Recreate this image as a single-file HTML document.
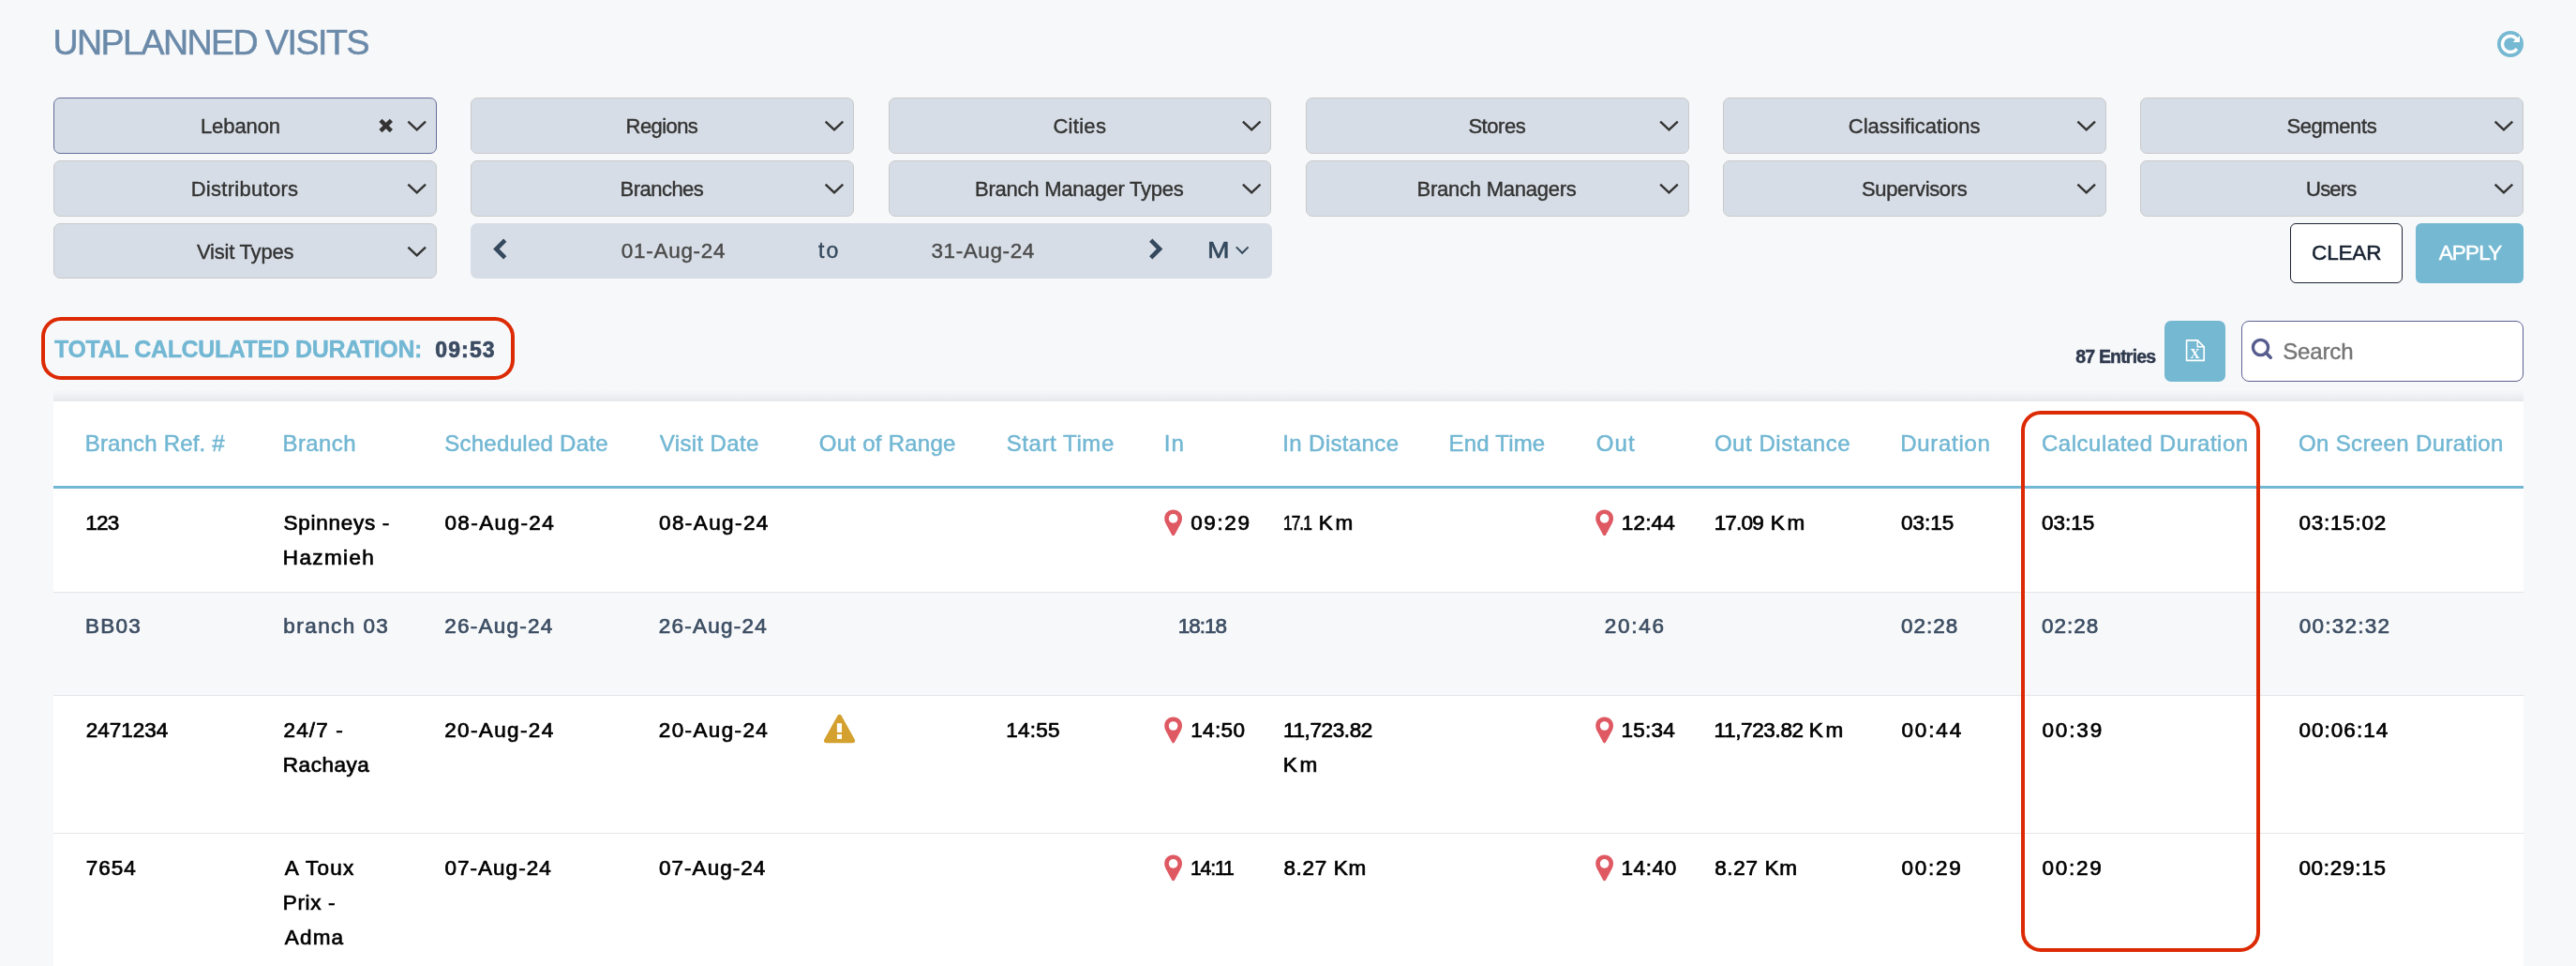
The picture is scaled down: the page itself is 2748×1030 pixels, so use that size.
<!DOCTYPE html>
<html lang="en"><head><meta charset="utf-8"><title>Unplanned Visits</title>
<style>
html,body{margin:0;padding:0}
body{width:2748px;height:1030px;overflow:hidden;position:relative;background:#f7f8fa;font-family:"Liberation Sans",sans-serif;}
.b{position:absolute;display:block}
.t{position:absolute;white-space:nowrap;display:block}
#wrap{position:absolute;left:0;top:0;width:2748px;height:1030px;will-change:transform}
</style></head><body><div id="wrap">
<span class="t" style="left:56.40px;top:26.85px;font-size:37.5px;line-height:37.5px;color:#6b8aa9;letter-spacing:-1.500px;-webkit-text-stroke:0.55px #6b8aa9;">UNPLANNED VISITS</span>
<svg class="b" style="left:2664px;top:33px" width="29" height="29" viewBox="0 0 29 29"><circle cx="14" cy="14" r="14" fill="#76b9d2"/><path d="M20.9 18.9 A8.5 8.5 0 1 1 21.1 9.3" fill="none" stroke="#fff" stroke-width="3.4"/><path d="M24 5 L24 12 L16.6 12 Z" fill="#fff"/></svg>
<div class="b" style="left:57.0px;top:104px;width:408.75px;height:60px;background:#d7dde6;border:1px solid #666d9a;border-radius:7px;box-sizing:border-box;"></div>
<span class="t" style="left:213.93px;top:123.50px;font-size:22px;line-height:22px;color:#333;letter-spacing:-0.083px;-webkit-text-stroke:0.4px #333;">Lebanon</span>
<svg class="b" style="left:433px;top:127px" width="24" height="16" viewBox="0 0 24 16"><g transform="translate(0.4 0.7)"><path d="M2 2 L11.3 10.6 L20.6 2" fill="none" stroke="#333" stroke-width="2.4" stroke-linecap="butt" stroke-linejoin="miter"/></g></svg>
<svg class="b" style="left:401px;top:124px" width="21" height="21" viewBox="0 0 21 21"><g transform="translate(0.7 0)"><path d="M4.3 4.3 L15.7 15.7 M15.7 4.3 L4.3 15.7" stroke="#333" stroke-width="4.5" stroke-linecap="butt"/></g></svg>
<div class="b" style="left:502.25px;top:104px;width:408.75px;height:60px;background:#d7dde6;border:1px solid #c9caca;border-radius:7px;box-sizing:border-box;"></div>
<span class="t" style="left:667.62px;top:123.50px;font-size:22px;line-height:22px;color:#333;letter-spacing:-0.583px;-webkit-text-stroke:0.4px #333;">Regions</span>
<svg class="b" style="left:878px;top:127px" width="24" height="16" viewBox="0 0 24 16"><g transform="translate(0.65 0.7)"><path d="M2 2 L11.3 10.6 L20.6 2" fill="none" stroke="#333" stroke-width="2.4" stroke-linecap="butt" stroke-linejoin="miter"/></g></svg>
<div class="b" style="left:947.5px;top:104px;width:408.75px;height:60px;background:#d7dde6;border:1px solid #c9caca;border-radius:7px;box-sizing:border-box;"></div>
<span class="t" style="left:1123.38px;top:123.50px;font-size:22px;line-height:22px;color:#333;letter-spacing:0.300px;-webkit-text-stroke:0.4px #333;">Cities</span>
<svg class="b" style="left:1323px;top:127px" width="24" height="16" viewBox="0 0 24 16"><g transform="translate(0.9 0.7)"><path d="M2 2 L11.3 10.6 L20.6 2" fill="none" stroke="#333" stroke-width="2.4" stroke-linecap="butt" stroke-linejoin="miter"/></g></svg>
<div class="b" style="left:1392.75px;top:104px;width:408.75px;height:60px;background:#d7dde6;border:1px solid #c9caca;border-radius:7px;box-sizing:border-box;"></div>
<span class="t" style="left:1566.38px;top:123.50px;font-size:22px;line-height:22px;color:#333;letter-spacing:-0.450px;-webkit-text-stroke:0.4px #333;">Stores</span>
<svg class="b" style="left:1769px;top:127px" width="24" height="16" viewBox="0 0 24 16"><g transform="translate(0.15 0.7)"><path d="M2 2 L11.3 10.6 L20.6 2" fill="none" stroke="#333" stroke-width="2.4" stroke-linecap="butt" stroke-linejoin="miter"/></g></svg>
<div class="b" style="left:1838.0px;top:104px;width:408.75px;height:60px;background:#d7dde6;border:1px solid #c9caca;border-radius:7px;box-sizing:border-box;"></div>
<span class="t" style="left:1971.78px;top:123.50px;font-size:22px;line-height:22px;color:#333;letter-spacing:0.014px;-webkit-text-stroke:0.4px #333;">Classifications</span>
<svg class="b" style="left:2214px;top:127px" width="24" height="16" viewBox="0 0 24 16"><g transform="translate(0.4 0.7)"><path d="M2 2 L11.3 10.6 L20.6 2" fill="none" stroke="#333" stroke-width="2.4" stroke-linecap="butt" stroke-linejoin="miter"/></g></svg>
<div class="b" style="left:2283.25px;top:104px;width:408.75px;height:60px;background:#d7dde6;border:1px solid #c9caca;border-radius:7px;box-sizing:border-box;"></div>
<span class="t" style="left:2439.38px;top:123.50px;font-size:22px;line-height:22px;color:#333;letter-spacing:-0.393px;-webkit-text-stroke:0.4px #333;">Segments</span>
<svg class="b" style="left:2659px;top:127px" width="24" height="16" viewBox="0 0 24 16"><g transform="translate(0.65 0.7)"><path d="M2 2 L11.3 10.6 L20.6 2" fill="none" stroke="#333" stroke-width="2.4" stroke-linecap="butt" stroke-linejoin="miter"/></g></svg>
<div class="b" style="left:57.0px;top:171px;width:408.75px;height:60px;background:#d7dde6;border:1px solid #c9caca;border-radius:7px;box-sizing:border-box;"></div>
<span class="t" style="left:203.68px;top:190.50px;font-size:22px;line-height:22px;color:#333;letter-spacing:0.286px;-webkit-text-stroke:0.4px #333;">Distributors</span>
<svg class="b" style="left:433px;top:194px" width="24" height="16" viewBox="0 0 24 16"><g transform="translate(0.4 0.7)"><path d="M2 2 L11.3 10.6 L20.6 2" fill="none" stroke="#333" stroke-width="2.4" stroke-linecap="butt" stroke-linejoin="miter"/></g></svg>
<div class="b" style="left:502.25px;top:171px;width:408.75px;height:60px;background:#d7dde6;border:1px solid #c9caca;border-radius:7px;box-sizing:border-box;"></div>
<span class="t" style="left:661.62px;top:190.50px;font-size:22px;line-height:22px;color:#333;letter-spacing:-0.536px;-webkit-text-stroke:0.4px #333;">Branches</span>
<svg class="b" style="left:878px;top:194px" width="24" height="16" viewBox="0 0 24 16"><g transform="translate(0.65 0.7)"><path d="M2 2 L11.3 10.6 L20.6 2" fill="none" stroke="#333" stroke-width="2.4" stroke-linecap="butt" stroke-linejoin="miter"/></g></svg>
<div class="b" style="left:947.5px;top:171px;width:408.75px;height:60px;background:#d7dde6;border:1px solid #c9caca;border-radius:7px;box-sizing:border-box;"></div>
<span class="t" style="left:1040.03px;top:190.50px;font-size:22px;line-height:22px;color:#333;letter-spacing:-0.226px;-webkit-text-stroke:0.4px #333;">Branch Manager Types</span>
<svg class="b" style="left:1323px;top:194px" width="24" height="16" viewBox="0 0 24 16"><g transform="translate(0.9 0.7)"><path d="M2 2 L11.3 10.6 L20.6 2" fill="none" stroke="#333" stroke-width="2.4" stroke-linecap="butt" stroke-linejoin="miter"/></g></svg>
<div class="b" style="left:1392.75px;top:171px;width:408.75px;height:60px;background:#d7dde6;border:1px solid #c9caca;border-radius:7px;box-sizing:border-box;"></div>
<span class="t" style="left:1511.62px;top:190.50px;font-size:22px;line-height:22px;color:#333;letter-spacing:-0.250px;-webkit-text-stroke:0.4px #333;">Branch Managers</span>
<svg class="b" style="left:1769px;top:194px" width="24" height="16" viewBox="0 0 24 16"><g transform="translate(0.15 0.7)"><path d="M2 2 L11.3 10.6 L20.6 2" fill="none" stroke="#333" stroke-width="2.4" stroke-linecap="butt" stroke-linejoin="miter"/></g></svg>
<div class="b" style="left:1838.0px;top:171px;width:408.75px;height:60px;background:#d7dde6;border:1px solid #c9caca;border-radius:7px;box-sizing:border-box;"></div>
<span class="t" style="left:1985.88px;top:190.50px;font-size:22px;line-height:22px;color:#333;letter-spacing:-0.325px;-webkit-text-stroke:0.4px #333;">Supervisors</span>
<svg class="b" style="left:2214px;top:194px" width="24" height="16" viewBox="0 0 24 16"><g transform="translate(0.4 0.7)"><path d="M2 2 L11.3 10.6 L20.6 2" fill="none" stroke="#333" stroke-width="2.4" stroke-linecap="butt" stroke-linejoin="miter"/></g></svg>
<div class="b" style="left:2283.25px;top:171px;width:408.75px;height:60px;background:#d7dde6;border:1px solid #c9caca;border-radius:7px;box-sizing:border-box;"></div>
<span class="t" style="left:2460.12px;top:190.50px;font-size:22px;line-height:22px;color:#333;letter-spacing:-0.812px;-webkit-text-stroke:0.4px #333;">Users</span>
<svg class="b" style="left:2659px;top:194px" width="24" height="16" viewBox="0 0 24 16"><g transform="translate(0.65 0.7)"><path d="M2 2 L11.3 10.6 L20.6 2" fill="none" stroke="#333" stroke-width="2.4" stroke-linecap="butt" stroke-linejoin="miter"/></g></svg>
<div class="b" style="left:57.0px;top:238px;width:408.75px;height:59px;background:#d7dde6;border:1px solid #c9caca;border-radius:7px;box-sizing:border-box;"></div>
<span class="t" style="left:209.88px;top:257.50px;font-size:22px;line-height:22px;color:#333;letter-spacing:-0.200px;-webkit-text-stroke:0.4px #333;">Visit Types</span>
<svg class="b" style="left:433px;top:261px" width="24" height="16" viewBox="0 0 24 16"><g transform="translate(0.4 0.7)"><path d="M2 2 L11.3 10.6 L20.6 2" fill="none" stroke="#333" stroke-width="2.4" stroke-linecap="butt" stroke-linejoin="miter"/></g></svg>
<div class="b" style="left:502px;top:238px;width:855px;height:59px;background:#d7dde6;border-radius:7px;"></div>
<svg class="b" style="left:522px;top:251px" width="25" height="31" viewBox="0 0 25 31"><path d="M16.75 5.1 L7.35 14.5 L16.75 23.9" fill="none" stroke="#34495e" stroke-width="4.6"/></svg>
<span class="t" style="left:662.75px;top:256.65px;font-size:22.5px;line-height:22.5px;color:#4a4a4a;letter-spacing:0.719px;-webkit-text-stroke:0.4px #4a4a4a;">01-Aug-24</span>
<span class="t" style="left:872.95px;top:255.90px;font-size:23px;line-height:23px;color:#34495e;letter-spacing:2.250px;-webkit-text-stroke:0.4px #34495e;">to</span>
<span class="t" style="left:993.45px;top:256.65px;font-size:22.5px;line-height:22.5px;color:#4a4a4a;letter-spacing:0.594px;-webkit-text-stroke:0.4px #4a4a4a;">31-Aug-24</span>
<svg class="b" style="left:1221px;top:251px" width="25" height="31" viewBox="0 0 25 31"><path d="M6.7 5.1 L16.1 14.5 L6.7 23.9" fill="none" stroke="#34495e" stroke-width="4.6"/></svg>
<span class="t" style="left:1287.74px;top:254.50px;font-size:24px;line-height:24px;color:#34495e;-webkit-text-stroke:0.6px #34495e;transform:scaleX(1.1758);transform-origin:0 0;">M</span>
<svg class="b" style="left:1316px;top:260px" width="19" height="15" viewBox="0 0 19 15"><path d="M2.8 3.4 L9.2 9.8 L15.6 3.4" fill="none" stroke="#34495e" stroke-width="2"/></svg>
<div class="b" style="left:2443px;top:238px;width:120px;height:64px;background:#fff;border:1px solid #1c2434;border-radius:6px;box-sizing:border-box;"></div>
<span class="t" style="left:2466.10px;top:259.25px;font-size:22.5px;line-height:22.5px;color:#16202f;letter-spacing:-0.163px;-webkit-text-stroke:0.5px #16202f;">CLEAR</span>
<div class="b" style="left:2577px;top:238px;width:115px;height:64px;background:#74b8d2;border-radius:6px;"></div>
<span class="t" style="left:2601.65px;top:259.25px;font-size:22.5px;line-height:22.5px;color:#fff;letter-spacing:-0.800px;-webkit-text-stroke:0.5px #fff;">APPLY</span>
<div class="b" style="left:44px;top:338px;width:505px;height:67px;border:4px solid #dc2a04;border-radius:21px;box-sizing:border-box;"></div>
<span class="t" style="left:58.10px;top:360.20px;font-size:25px;line-height:25px;color:#72b7d3;letter-spacing:-0.380px;font-weight:700;-webkit-text-stroke:0.4px #72b7d3;">TOTAL CALCULATED DURATION:</span>
<span class="t" style="left:464.20px;top:362.30px;font-size:23px;line-height:23px;color:#3a4b62;letter-spacing:1.162px;font-weight:700;-webkit-text-stroke:0.7px #3a4b62;">09:53</span>
<span class="t" style="left:2214.20px;top:371.05px;font-size:19.5px;line-height:19.5px;color:#2f394d;letter-spacing:-0.806px;font-weight:700;-webkit-text-stroke:0.45px #2f394d;">87 Entries</span>
<div class="b" style="left:2309px;top:342px;width:65px;height:65px;background:#74b8d2;border-radius:7px;"></div>
<svg class="b" style="left:2330px;top:360px" width="25" height="28" viewBox="0 0 25 28"><path d="M2.6 2.8 H14.2 L21.2 9.8 V24.4 H2.6 Z" fill="none" stroke="#fff" stroke-width="1.7" stroke-linejoin="round"/><path d="M14.2 2.8 V9.8 H21.2" fill="none" stroke="#fff" stroke-width="1.4"/></svg>
<span class="t" style="left:2336.25px;top:369.75px;font-size:14.5px;line-height:14.5px;color:#fff;font-family:'Liberation Serif',serif;font-weight:700;">X</span>
<div class="b" style="left:2391px;top:342px;width:301px;height:65px;background:#fff;border:1px solid #5d6290;border-radius:8px;box-sizing:border-box;"></div>
<svg class="b" style="left:2400px;top:359px" width="29" height="29" viewBox="0 0 29 29"><circle cx="11.5" cy="11.5" r="8.1" fill="none" stroke="#565c8e" stroke-width="3.3"/><path d="M17.3 17.3 L22.2 22.2" stroke="#565c8e" stroke-width="3.6" stroke-linecap="round"/></svg>
<span class="t" style="left:2435.20px;top:362.50px;font-size:24px;line-height:24px;color:#757575;letter-spacing:-0.150px;-webkit-text-stroke:0.4px #757575;">Search</span>
<div class="b" style="left:57px;top:416px;width:2634.7px;height:12px;background:linear-gradient(to bottom,rgba(226,229,232,0) 0%,rgba(229,232,235,0.5) 55%,#e5e8ea 100%);"></div>
<div class="b" style="left:57px;top:428px;width:2634.7px;height:602px;background:#fff;"></div>
<div class="b" style="left:57px;top:518px;width:2634.7px;height:3px;background:#72b7d3;"></div>
<div class="b" style="left:57px;top:632px;width:2634.7px;height:109px;background:#f7f8fa;"></div>
<div class="b" style="left:57px;top:631px;width:2634.7px;height:1px;background:#e3e5e8;"></div>
<div class="b" style="left:57px;top:741px;width:2634.7px;height:1px;background:#e3e5e8;"></div>
<div class="b" style="left:57px;top:888px;width:2634.7px;height:1px;background:#e3e5e8;"></div>
<span class="t" style="left:90.75px;top:460.80px;font-size:24px;line-height:24px;color:#72b7d3;letter-spacing:0.167px;-webkit-text-stroke:0.5px #72b7d3;">Branch Ref. #</span>
<span class="t" style="left:301.55px;top:460.80px;font-size:24px;line-height:24px;color:#72b7d3;letter-spacing:0.400px;-webkit-text-stroke:0.5px #72b7d3;">Branch</span>
<span class="t" style="left:474.15px;top:460.80px;font-size:24px;line-height:24px;color:#72b7d3;letter-spacing:0.288px;-webkit-text-stroke:0.5px #72b7d3;">Scheduled Date</span>
<span class="t" style="left:703.75px;top:460.80px;font-size:24px;line-height:24px;color:#72b7d3;letter-spacing:0.361px;-webkit-text-stroke:0.5px #72b7d3;">Visit Date</span>
<span class="t" style="left:873.70px;top:460.80px;font-size:24px;line-height:24px;color:#72b7d3;letter-spacing:0.273px;-webkit-text-stroke:0.5px #72b7d3;">Out of Range</span>
<span class="t" style="left:1073.65px;top:460.80px;font-size:24px;line-height:24px;color:#72b7d3;letter-spacing:0.583px;-webkit-text-stroke:0.5px #72b7d3;">Start Time</span>
<span class="t" style="left:1241.70px;top:460.80px;font-size:24px;line-height:24px;color:#72b7d3;letter-spacing:1.250px;-webkit-text-stroke:0.5px #72b7d3;">In</span>
<span class="t" style="left:1368.20px;top:460.80px;font-size:24px;line-height:24px;color:#72b7d3;letter-spacing:0.375px;-webkit-text-stroke:0.5px #72b7d3;">In Distance</span>
<span class="t" style="left:1545.55px;top:460.80px;font-size:24px;line-height:24px;color:#72b7d3;letter-spacing:0.179px;-webkit-text-stroke:0.5px #72b7d3;">End Time</span>
<span class="t" style="left:1702.70px;top:460.80px;font-size:24px;line-height:24px;color:#72b7d3;letter-spacing:1.125px;-webkit-text-stroke:0.5px #72b7d3;">Out</span>
<span class="t" style="left:1828.90px;top:460.80px;font-size:24px;line-height:24px;color:#72b7d3;letter-spacing:0.545px;-webkit-text-stroke:0.5px #72b7d3;">Out Distance</span>
<span class="t" style="left:2027.15px;top:460.80px;font-size:24px;line-height:24px;color:#72b7d3;letter-spacing:0.721px;-webkit-text-stroke:0.5px #72b7d3;">Duration</span>
<span class="t" style="left:2177.90px;top:460.80px;font-size:24px;line-height:24px;color:#72b7d3;letter-spacing:0.528px;-webkit-text-stroke:0.5px #72b7d3;">Calculated Duration</span>
<span class="t" style="left:2451.90px;top:460.80px;font-size:24px;line-height:24px;color:#72b7d3;letter-spacing:0.368px;-webkit-text-stroke:0.5px #72b7d3;">On Screen Duration</span>
<span class="t" style="left:91.25px;top:546.65px;font-size:22.5px;line-height:22.5px;color:#000;letter-spacing:-0.750px;-webkit-text-stroke:0.7px #000;">123</span>
<span class="t" style="left:302.55px;top:546.65px;font-size:22.5px;line-height:22.5px;color:#000;letter-spacing:0.722px;-webkit-text-stroke:0.7px #000;">Spinneys -</span>
<span class="t" style="left:301.80px;top:583.65px;font-size:22.5px;line-height:22.5px;color:#000;letter-spacing:1.375px;-webkit-text-stroke:0.7px #000;">Hazmieh</span>
<span class="t" style="left:474.40px;top:546.65px;font-size:22.5px;line-height:22.5px;color:#000;letter-spacing:1.406px;-webkit-text-stroke:0.7px #000;">08-Aug-24</span>
<span class="t" style="left:703.00px;top:546.65px;font-size:22.5px;line-height:22.5px;color:#000;letter-spacing:1.406px;-webkit-text-stroke:0.7px #000;">08-Aug-24</span>
<svg class="b" style="left:1241px;top:543px" width="21" height="30" viewBox="0 0 21 30"><g transform="translate(0.6 0.1)"><path d="M10 0.4 C4.6 0.4 0.6 4.5 0.6 9.6 C0.6 12.2 1.6 14.3 2.7 16.4 L8.6 27.4 C9.2 28.5 10.8 28.5 11.4 27.4 L17.3 16.4 C18.4 14.3 19.4 12.2 19.4 9.6 C19.4 4.5 15.4 0.4 10 0.4 Z" fill="#df5963"/><circle cx="10" cy="9.8" r="4.8" fill="#fff"/></g></svg>
<span class="t" style="left:1270.20px;top:546.65px;font-size:22.5px;line-height:22.5px;color:#000;letter-spacing:1.600px;-webkit-text-stroke:0.7px #000;">09:29</span>
<span class="t" style="left:1369.24px;top:546.65px;font-size:22.5px;line-height:22.5px;color:#000;letter-spacing:-1.238px;-webkit-text-stroke:0.7px #000;transform:scaleX(0.7703);transform-origin:0 0;">17.1</span>
<span class="t" style="left:1406.80px;top:546.65px;font-size:22.5px;line-height:22.5px;color:#000;letter-spacing:2.800px;-webkit-text-stroke:0.7px #000;">Km</span>
<svg class="b" style="left:1701px;top:543px" width="21" height="30" viewBox="0 0 21 30"><g transform="translate(0.6 0.1)"><path d="M10 0.4 C4.6 0.4 0.6 4.5 0.6 9.6 C0.6 12.2 1.6 14.3 2.7 16.4 L8.6 27.4 C9.2 28.5 10.8 28.5 11.4 27.4 L17.3 16.4 C18.4 14.3 19.4 12.2 19.4 9.6 C19.4 4.5 15.4 0.4 10 0.4 Z" fill="#df5963"/><circle cx="10" cy="9.8" r="4.8" fill="#fff"/></g></svg>
<span class="t" style="left:1729.85px;top:546.65px;font-size:22.5px;line-height:22.5px;color:#000;letter-spacing:0.162px;-webkit-text-stroke:0.7px #000;">12:44</span>
<span class="t" style="left:1828.65px;top:546.65px;font-size:22.5px;line-height:22.5px;color:#000;letter-spacing:-0.812px;-webkit-text-stroke:0.7px #000;">17.09</span>
<span class="t" style="left:1888.80px;top:546.65px;font-size:22.5px;line-height:22.5px;color:#000;letter-spacing:2.800px;-webkit-text-stroke:0.7px #000;">Km</span>
<span class="t" style="left:2028.10px;top:546.65px;font-size:22.5px;line-height:22.5px;color:#000;letter-spacing:-0.062px;-webkit-text-stroke:0.7px #000;">03:15</span>
<span class="t" style="left:2178.10px;top:546.65px;font-size:22.5px;line-height:22.5px;color:#000;letter-spacing:-0.062px;-webkit-text-stroke:0.7px #000;">03:15</span>
<span class="t" style="left:2452.40px;top:546.65px;font-size:22.5px;line-height:22.5px;color:#000;letter-spacing:0.750px;-webkit-text-stroke:0.7px #000;">03:15:02</span>
<span class="t" style="left:91.00px;top:657.15px;font-size:22.5px;line-height:22.5px;color:#3d4e63;letter-spacing:1.250px;-webkit-text-stroke:0.7px #3d4e63;">BB03</span>
<span class="t" style="left:302.30px;top:657.15px;font-size:22.5px;line-height:22.5px;color:#3d4e63;letter-spacing:1.438px;-webkit-text-stroke:0.7px #3d4e63;">branch 03</span>
<span class="t" style="left:474.15px;top:657.15px;font-size:22.5px;line-height:22.5px;color:#3d4e63;letter-spacing:1.250px;-webkit-text-stroke:0.7px #3d4e63;">26-Aug-24</span>
<span class="t" style="left:702.75px;top:657.15px;font-size:22.5px;line-height:22.5px;color:#3d4e63;letter-spacing:1.250px;-webkit-text-stroke:0.7px #3d4e63;">26-Aug-24</span>
<span class="t" style="left:1256.65px;top:657.15px;font-size:22.5px;line-height:22.5px;color:#3d4e63;letter-spacing:-1.000px;-webkit-text-stroke:0.7px #3d4e63;">18:18</span>
<span class="t" style="left:1711.65px;top:657.15px;font-size:22.5px;line-height:22.5px;color:#3d4e63;letter-spacing:1.750px;-webkit-text-stroke:0.7px #3d4e63;">20:46</span>
<span class="t" style="left:2028.10px;top:657.15px;font-size:22.5px;line-height:22.5px;color:#3d4e63;letter-spacing:0.938px;-webkit-text-stroke:0.7px #3d4e63;">02:28</span>
<span class="t" style="left:2178.10px;top:657.15px;font-size:22.5px;line-height:22.5px;color:#3d4e63;letter-spacing:0.938px;-webkit-text-stroke:0.7px #3d4e63;">02:28</span>
<span class="t" style="left:2452.70px;top:657.15px;font-size:22.5px;line-height:22.5px;color:#3d4e63;letter-spacing:1.250px;-webkit-text-stroke:0.7px #3d4e63;">00:32:32</span>
<span class="t" style="left:91.75px;top:767.85px;font-size:22.5px;line-height:22.5px;color:#000;-webkit-text-stroke:0.7px #000;">2471234</span>
<span class="t" style="left:302.55px;top:767.85px;font-size:22.5px;line-height:22.5px;color:#000;letter-spacing:1.150px;-webkit-text-stroke:0.7px #000;">24/7 -</span>
<span class="t" style="left:301.80px;top:804.85px;font-size:22.5px;line-height:22.5px;color:#000;letter-spacing:0.542px;-webkit-text-stroke:0.7px #000;">Rachaya</span>
<span class="t" style="left:474.15px;top:767.85px;font-size:22.5px;line-height:22.5px;color:#000;letter-spacing:1.375px;-webkit-text-stroke:0.7px #000;">20-Aug-24</span>
<span class="t" style="left:702.75px;top:767.85px;font-size:22.5px;line-height:22.5px;color:#000;letter-spacing:1.375px;-webkit-text-stroke:0.7px #000;">20-Aug-24</span>
<svg class="b" style="left:878px;top:760px" width="37" height="35" viewBox="0 0 37 35"><path d="M15.5 3.0 C16.4 1.4 18.7 1.4 19.6 3.0 L33.8 28.6 C34.8 30.3 33.6 32.2 31.7 32.2 H3.4 C1.5 32.2 0.3 30.3 1.3 28.6 Z" fill="#d4a02e"/><rect x="14.9" y="11.2" width="5.1" height="9.7" fill="#fff"/><rect x="14.9" y="23" width="5.1" height="4.9" fill="#fff"/></svg>
<span class="t" style="left:1073.15px;top:767.85px;font-size:22.5px;line-height:22.5px;color:#000;letter-spacing:0.250px;-webkit-text-stroke:0.7px #000;">14:55</span>
<svg class="b" style="left:1241px;top:764px" width="21" height="30" viewBox="0 0 21 30"><g transform="translate(0.6 0.2)"><path d="M10 0.4 C4.6 0.4 0.6 4.5 0.6 9.6 C0.6 12.2 1.6 14.3 2.7 16.4 L8.6 27.4 C9.2 28.5 10.8 28.5 11.4 27.4 L17.3 16.4 C18.4 14.3 19.4 12.2 19.4 9.6 C19.4 4.5 15.4 0.4 10 0.4 Z" fill="#df5963"/><circle cx="10" cy="9.8" r="4.8" fill="#fff"/></g></svg>
<span class="t" style="left:1270.15px;top:767.85px;font-size:22.5px;line-height:22.5px;color:#000;letter-spacing:0.375px;-webkit-text-stroke:0.7px #000;">14:50</span>
<span class="t" style="left:1368.95px;top:767.85px;font-size:22.5px;line-height:22.5px;color:#000;letter-spacing:-0.375px;-webkit-text-stroke:0.7px #000;">11,723.82</span>
<span class="t" style="left:1368.70px;top:804.85px;font-size:22.5px;line-height:22.5px;color:#000;letter-spacing:2.800px;-webkit-text-stroke:0.7px #000;">Km</span>
<svg class="b" style="left:1701px;top:764px" width="21" height="30" viewBox="0 0 21 30"><g transform="translate(0.6 0.2)"><path d="M10 0.4 C4.6 0.4 0.6 4.5 0.6 9.6 C0.6 12.2 1.6 14.3 2.7 16.4 L8.6 27.4 C9.2 28.5 10.8 28.5 11.4 27.4 L17.3 16.4 C18.4 14.3 19.4 12.2 19.4 9.6 C19.4 4.5 15.4 0.4 10 0.4 Z" fill="#df5963"/><circle cx="10" cy="9.8" r="4.8" fill="#fff"/></g></svg>
<span class="t" style="left:1729.45px;top:767.85px;font-size:22.5px;line-height:22.5px;color:#000;letter-spacing:0.238px;-webkit-text-stroke:0.7px #000;">15:34</span>
<span class="t" style="left:1828.55px;top:767.85px;font-size:22.5px;line-height:22.5px;color:#000;letter-spacing:-0.363px;-webkit-text-stroke:0.7px #000;">11,723.82</span>
<span class="t" style="left:1929.70px;top:767.85px;font-size:22.5px;line-height:22.5px;color:#000;letter-spacing:2.800px;-webkit-text-stroke:0.7px #000;">Km</span>
<span class="t" style="left:2028.40px;top:767.85px;font-size:22.5px;line-height:22.5px;color:#000;letter-spacing:1.875px;-webkit-text-stroke:0.7px #000;">00:44</span>
<span class="t" style="left:2178.40px;top:767.85px;font-size:22.5px;line-height:22.5px;color:#000;letter-spacing:1.875px;-webkit-text-stroke:0.7px #000;">00:39</span>
<span class="t" style="left:2452.40px;top:767.85px;font-size:22.5px;line-height:22.5px;color:#000;letter-spacing:1.036px;-webkit-text-stroke:0.7px #000;">00:06:14</span>
<span class="t" style="left:91.75px;top:914.75px;font-size:22.5px;line-height:22.5px;color:#000;letter-spacing:1.000px;-webkit-text-stroke:0.7px #000;">7654</span>
<span class="t" style="left:303.80px;top:914.75px;font-size:22.5px;line-height:22.5px;color:#000;letter-spacing:1.250px;-webkit-text-stroke:0.7px #000;">A Toux</span>
<span class="t" style="left:301.80px;top:951.75px;font-size:22.5px;line-height:22.5px;color:#000;letter-spacing:0.650px;-webkit-text-stroke:0.7px #000;">Prix -</span>
<span class="t" style="left:303.80px;top:988.75px;font-size:22.5px;line-height:22.5px;color:#000;letter-spacing:1.167px;-webkit-text-stroke:0.7px #000;">Adma</span>
<span class="t" style="left:474.40px;top:914.75px;font-size:22.5px;line-height:22.5px;color:#000;letter-spacing:1.031px;-webkit-text-stroke:0.7px #000;">07-Aug-24</span>
<span class="t" style="left:703.00px;top:914.75px;font-size:22.5px;line-height:22.5px;color:#000;letter-spacing:1.031px;-webkit-text-stroke:0.7px #000;">07-Aug-24</span>
<svg class="b" style="left:1241px;top:911px" width="21" height="30" viewBox="0 0 21 30"><g transform="translate(0.6 0.1)"><path d="M10 0.4 C4.6 0.4 0.6 4.5 0.6 9.6 C0.6 12.2 1.6 14.3 2.7 16.4 L8.6 27.4 C9.2 28.5 10.8 28.5 11.4 27.4 L17.3 16.4 C18.4 14.3 19.4 12.2 19.4 9.6 C19.4 4.5 15.4 0.4 10 0.4 Z" fill="#df5963"/><circle cx="10" cy="9.8" r="4.8" fill="#fff"/></g></svg>
<span class="t" style="left:1270.22px;top:914.75px;font-size:22.5px;line-height:22.5px;color:#000;letter-spacing:-1.238px;-webkit-text-stroke:0.7px #000;transform:scaleX(0.9414);transform-origin:0 0;">14:11</span>
<span class="t" style="left:1369.45px;top:914.75px;font-size:22.5px;line-height:22.5px;color:#000;letter-spacing:0.667px;-webkit-text-stroke:0.7px #000;">8.27 Km</span>
<svg class="b" style="left:1701px;top:911px" width="21" height="30" viewBox="0 0 21 30"><g transform="translate(0.6 0.1)"><path d="M10 0.4 C4.6 0.4 0.6 4.5 0.6 9.6 C0.6 12.2 1.6 14.3 2.7 16.4 L8.6 27.4 C9.2 28.5 10.8 28.5 11.4 27.4 L17.3 16.4 C18.4 14.3 19.4 12.2 19.4 9.6 C19.4 4.5 15.4 0.4 10 0.4 Z" fill="#df5963"/><circle cx="10" cy="9.8" r="4.8" fill="#fff"/></g></svg>
<span class="t" style="left:1729.45px;top:914.75px;font-size:22.5px;line-height:22.5px;color:#000;letter-spacing:0.600px;-webkit-text-stroke:0.7px #000;">14:40</span>
<span class="t" style="left:1829.15px;top:914.75px;font-size:22.5px;line-height:22.5px;color:#000;letter-spacing:0.667px;-webkit-text-stroke:0.7px #000;">8.27 Km</span>
<span class="t" style="left:2028.40px;top:914.75px;font-size:22.5px;line-height:22.5px;color:#000;letter-spacing:1.750px;-webkit-text-stroke:0.7px #000;">00:29</span>
<span class="t" style="left:2178.40px;top:914.75px;font-size:22.5px;line-height:22.5px;color:#000;letter-spacing:1.750px;-webkit-text-stroke:0.7px #000;">00:29</span>
<span class="t" style="left:2452.40px;top:914.75px;font-size:22.5px;line-height:22.5px;color:#000;letter-spacing:0.714px;-webkit-text-stroke:0.7px #000;">00:29:15</span>
<div class="b" style="left:2156px;top:437.7px;width:255px;height:577.1px;border:4px solid #dc2a04;border-radius:21px;box-sizing:border-box;"></div>
</div></body></html>
